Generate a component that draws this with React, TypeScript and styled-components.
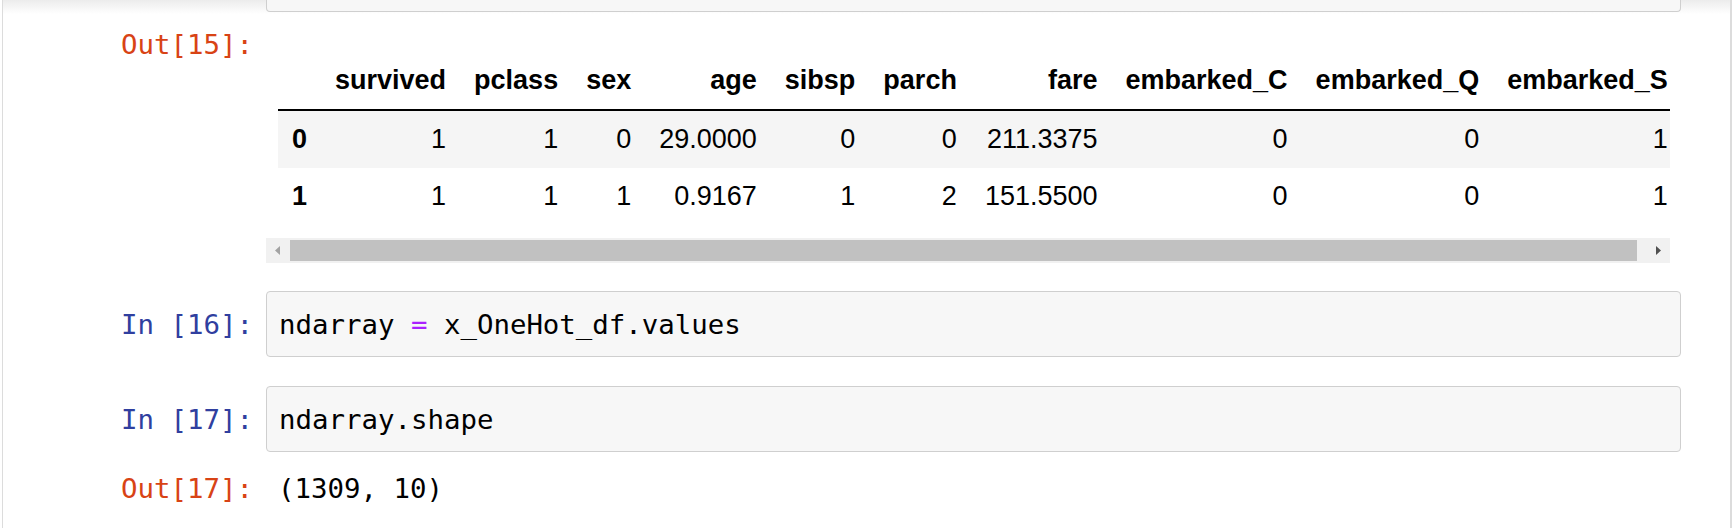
import React from "react"
import styled, { createGlobalStyle, css } from "styled-components"

const GlobalStyle = createGlobalStyle`
  html, body {
    margin: 0;
    padding: 0;
    background: #ffffff;
  }
`

const Mono = css`
  font-family: "DejaVu Sans Mono", "Liberation Mono", monospace;
  font-size: 27.4px;
  line-height: 33px;
`

const Notebook = styled.div`
  margin-left: 2px;
  width: 1727px;
  height: 528px;
  border-left: 1px solid #dcdcdc;
  border-right: 2px solid #dcdcdc;
  background: linear-gradient(to bottom, #ececec 0px, #ffffff 14px);
  overflow: hidden;
`

const Cell = styled.div<{ $top?: number }>`
  display: flex;
  align-items: flex-start;
  margin-top: ${(p) => p.$top ?? 0}px;
  padding-right: 49px;
`

const Prompt = styled.div<{ $out?: boolean; $top?: number }>`
  ${Mono}
  flex: none;
  width: 263px;
  box-sizing: border-box;
  padding-right: 13px;
  padding-top: ${(p) => p.$top ?? 0}px;
  text-align: right;
  color: ${(p) => (p.$out ? "#D84315" : "#303F9F")};
  white-space: pre;
`

const InputBox = styled.div<{ $cut?: boolean }>`
  ${Mono}
  flex: 1;
  min-width: 0;
  box-sizing: border-box;
  background: #f7f7f7;
  border: 1px solid #cfcfcf;
  border-radius: 4px;
  padding: 16px 12px 15px;
  color: #000000;
  white-space: pre;

  ${(p) =>
    p.$cut &&
    css`
      height: 12px;
      padding: 0;
      border-top: none;
      border-radius: 0 0 4px 4px;
    `}
`

const Operator = styled.span`
  color: #aa22ff;
`

const OutputArea = styled.div`
  flex: 1;
  min-width: 0;
  margin-right: 11px;
`

const Scroller = styled.div`
  margin-top: 40px;
  padding: 0 0 13px 12px;
  overflow: hidden;
`

const Table = styled.table`
  border-collapse: collapse;
  border-spacing: 0;
  font-family: "Liberation Sans", Arial, sans-serif;
  font-size: 27px;
  line-height: 31px;
  color: #000000;
  white-space: nowrap;

  thead {
    border-bottom: 2px solid #000000;
  }

  th,
  td {
    padding: 13px 14px;
    text-align: right;
    vertical-align: middle;
  }

  th {
    font-weight: bold;
  }

  tbody tr:nth-child(odd) {
    background: #f5f5f5;
  }
`

const IndexCell = styled.th`
  && {
    text-align: left;
  }
`

const ScrollBar = styled.div`
  display: flex;
  align-items: center;
  height: 25px;
  background: #f1f1f1;
`

const ScrollButton = styled.div`
  flex: none;
  width: 24px;
  height: 25px;
  display: flex;
  align-items: center;
  justify-content: center;
`

const Thumb = styled.div`
  flex: 1;
  height: 21px;
  background: #c1c1c1;
  margin-right: 9px;
`

const OutText = styled.div`
  ${Mono}
  padding: 20px 0 0 12px;
  color: #000000;
  white-space: pre;
`

const columns = [
  "survived",
  "pclass",
  "sex",
  "age",
  "sibsp",
  "parch",
  "fare",
  "embarked_C",
  "embarked_Q",
  "embarked_S",
]

const rows = [
  ["0", "1", "1", "0", "29.0000", "0", "0", "211.3375", "0", "0", "1"],
  ["1", "1", "1", "1", "0.9167", "1", "2", "151.5500", "0", "0", "1"],
]

function Arrow({ dir, color }: { dir: "left" | "right"; color: string }) {
  return (
    <svg width="6" height="9" viewBox="0 0 6 9">
      {dir === "left" ? (
        <path d="M5 0 L0 4.5 L5 9 Z" fill={color} />
      ) : (
        <path d="M1 0 L6 4.5 L1 9 Z" fill={color} />
      )}
    </svg>
  )
}

function App() {
  return (
    <>
      <GlobalStyle />
      <Notebook>
        <Cell>
          <Prompt />
          <InputBox $cut />
        </Cell>

        <Cell>
          <Prompt $out $top={16}>Out[15]:</Prompt>
          <OutputArea>
            <Scroller>
              <Table>
                <thead>
                  <tr>
                    <th></th>
                    {columns.map((c) => (
                      <th key={c}>{c}</th>
                    ))}
                  </tr>
                </thead>
                <tbody>
                  {rows.map((r) => (
                    <tr key={r[0]}>
                      <IndexCell>{r[0]}</IndexCell>
                      {r.slice(1).map((v, i) => (
                        <td key={i}>{v}</td>
                      ))}
                    </tr>
                  ))}
                </tbody>
              </Table>
            </Scroller>
            <ScrollBar>
              <ScrollButton>
                <Arrow dir="left" color="#a3a3a3" />
              </ScrollButton>
              <Thumb />
              <ScrollButton>
                <Arrow dir="right" color="#505050" />
              </ScrollButton>
            </ScrollBar>
          </OutputArea>
        </Cell>

        <Cell $top={28}>
          <Prompt $top={17}>In [16]:</Prompt>
          <InputBox>
            ndarray <Operator>=</Operator> x_OneHot_df.values
          </InputBox>
        </Cell>

        <Cell $top={29}>
          <Prompt $top={17}>In [17]:</Prompt>
          <InputBox>ndarray.shape</InputBox>
        </Cell>

        <Cell>
          <Prompt $out $top={20}>Out[17]:</Prompt>
          <OutText>(1309, 10)</OutText>
        </Cell>
      </Notebook>
    </>
  )
}

export default App
